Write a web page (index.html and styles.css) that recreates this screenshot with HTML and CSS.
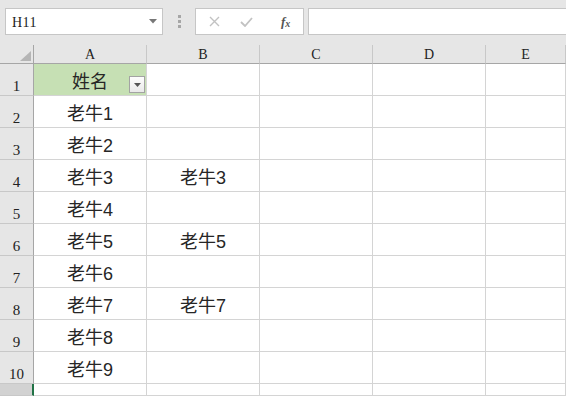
FILE: index.html
```html
<!DOCTYPE html>
<html lang="zh">
<head>
<meta charset="utf-8">
<link rel="stylesheet" href="styles.css">
</head>
<body>
<div class="toolbar">
  <div class="namebox">
    <span class="nb-text">H11</span>
    <svg class="nb-caret" width="8" height="5" viewBox="0 0 8 5"><path d="M0 0H8L4 4.5Z" fill="#777"/></svg>
  </div>
  <div class="sep"><i></i><i></i><i></i></div>
  <div class="fbtns">
    <svg class="fb-x" width="11" height="11" viewBox="0 0 11 11"><path d="M1 1L10 10M10 1L1 10" stroke="#c2c2c2" stroke-width="1.4"/></svg>
    <svg class="fb-ok" width="13" height="10" viewBox="0 0 13 10"><path d="M1 5L5 9L12 1" stroke="#c2c2c2" stroke-width="1.8" fill="none"/></svg>
    <span class="fb-fx">f<sub>x</sub></span>
  </div>
  <div class="finput"></div>
</div>
<div class="sheet">
  <div class="hc corner"><span class="tri"></span></div>
  <div class="hc">A</div><div class="hc">B</div><div class="hc">C</div><div class="hc">D</div><div class="hc">E</div>

  <div class="rh">1</div><div class="c title">姓名<span class="filter"><svg width="7" height="4" viewBox="0 0 7 4"><path d="M0 0H7L3.5 4Z" fill="#555"/></svg></span></div><div class="c"></div><div class="c"></div><div class="c"></div><div class="c"></div>
  <div class="rh">2</div><div class="c">老牛1</div><div class="c"></div><div class="c"></div><div class="c"></div><div class="c"></div>
  <div class="rh">3</div><div class="c">老牛2</div><div class="c"></div><div class="c"></div><div class="c"></div><div class="c"></div>
  <div class="rh">4</div><div class="c">老牛3</div><div class="c">老牛3</div><div class="c"></div><div class="c"></div><div class="c"></div>
  <div class="rh">5</div><div class="c">老牛4</div><div class="c"></div><div class="c"></div><div class="c"></div><div class="c"></div>
  <div class="rh">6</div><div class="c">老牛5</div><div class="c">老牛5</div><div class="c"></div><div class="c"></div><div class="c"></div>
  <div class="rh">7</div><div class="c">老牛6</div><div class="c"></div><div class="c"></div><div class="c"></div><div class="c"></div>
  <div class="rh">8</div><div class="c">老牛7</div><div class="c">老牛7</div><div class="c"></div><div class="c"></div><div class="c"></div>
  <div class="rh">9</div><div class="c">老牛8</div><div class="c"></div><div class="c"></div><div class="c"></div><div class="c"></div>
  <div class="rh">10</div><div class="c">老牛9</div><div class="c"></div><div class="c"></div><div class="c"></div><div class="c"></div>
  <div class="rh sel"></div><div class="c"></div><div class="c"></div><div class="c"></div><div class="c"></div><div class="c"></div>
</div>
</body>
</html>
```
FILE: styles.css
```css
* { box-sizing: border-box; }
html, body { margin: 0; padding: 0; }
body {
  width: 566px;
  height: 396px;
  overflow: hidden;
  background: #e6e6e6;
  font-family: "Liberation Sans", "Noto Sans CJK SC", sans-serif;
}
.toolbar {
  height: 45px;
  display: flex;
  align-items: flex-start;
  padding: 8px 0 0 5px;
  background: #e6e6e6;
}
.namebox {
  width: 158px;
  height: 27px;
  background: #fff;
  border: 1px solid #c6c6c6;
  display: flex;
  align-items: center;
  justify-content: space-between;
  padding: 0 5px 0 6px;
}
.nb-text {
  font-family: "Liberation Serif", serif;
  font-size: 14px;
  color: #222;
  padding-top: 2px;
  letter-spacing: 0.5px;
}
.nb-caret { margin-top: -1px; }
.sep {
  width: 32px;
  height: 27px;
  display: flex;
  flex-direction: column;
  align-items: center;
  justify-content: center;
  gap: 2px;
}
.sep i {
  display: block;
  width: 3px;
  height: 3px;
  background: #a6a6a6;
}
.fbtns {
  width: 109px;
  height: 27px;
  background: #fff;
  border: 1px solid #c6c6c6;
  display: flex;
  align-items: center;
  padding-left: 13px;
}
.fb-x { margin-right: 20px; }
.fb-ok { margin-right: 28px; }
.fb-fx {
  font-family: "Liberation Serif", serif;
  font-style: italic;
  font-size: 13px;
  color: #555;
  font-weight: bold;
}
.fb-fx sub { font-size: 10px; vertical-align: -1px; }
.finput {
  flex: 1;
  margin-left: 4px;
  height: 27px;
  background: #fff;
  border: 1px solid #c6c6c6;
  border-right: none;
}
.sheet {
  display: grid;
  grid-template-columns: 34px 113px 113px 113px 113px 1fr;
  grid-template-rows: 19px repeat(10, 32px) 1fr;
  height: 351px;
  background: #fff;
}
.hc {
  background: #e6e6e6;
  border-right: 1px solid #c8c8c8;
  border-bottom: 1px solid #a6a6a6;
  font-family: "Liberation Serif", serif;
  font-size: 14px;
  color: #222;
  display: flex;
  align-items: center;
  justify-content: center;
  padding-top: 1px;
}
.corner {
  position: relative;
  border-right: 1px solid #a6a6a6;
}
.tri {
  position: absolute;
  right: 2px;
  bottom: 2px;
  width: 0;
  height: 0;
  border-style: solid;
  border-width: 0 0 10px 11px;
  border-color: transparent transparent #b5b5b5 transparent;
}
.rh {
  background: #e6e6e6;
  border-right: 1px solid #a6a6a6;
  border-bottom: 1px solid #c8c8c8;
  font-family: "Liberation Serif", serif;
  font-size: 15px;
  color: #222;
  display: flex;
  align-items: flex-end;
  justify-content: center;
  padding-bottom: 0;
}
.rh.sel {
  background: #d2d2d2;
  border-right: 2px solid #217346;
}
.c {
  border-right: 1px solid #d4d4d4;
  border-bottom: 1px solid #d4d4d4;
  font-size: 18px;
  color: #262626;
  display: flex;
  align-items: center;
  justify-content: center;
  padding-top: 1px;
}
.title {
  background: #c6e0b4;
  position: relative;
}
.filter {
  position: absolute;
  right: 1px;
  bottom: 2px;
  width: 16px;
  height: 17px;
  border: 1px solid #a3a3a3;
  background: linear-gradient(#fdfdfd, #e9e9e9);
  display: flex;
  align-items: center;
  justify-content: center;
}
```
